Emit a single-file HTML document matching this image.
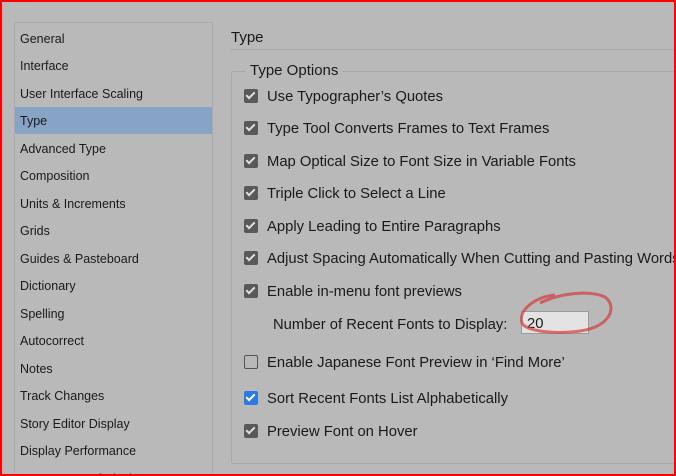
<!DOCTYPE html>
<html><head><style>
html,body{margin:0;width:676px;height:476px;overflow:hidden}
body{background:#b9b9b9;font-family:"Liberation Sans",sans-serif;color:#1a1a1a;position:relative}
.frame{position:absolute;left:0;top:0;width:672px;height:472px;border:2px solid #f00;z-index:5}
.side{position:absolute;left:14px;top:22px;width:197px;height:452px;border:1px solid #aaa;border-bottom:0;background:#b9b9b9;overflow:hidden}
.side div{position:absolute;left:5px;font-size:12.5px;height:27px;line-height:28px;width:188px}
.sel{background:#87a3c6;left:0!important;padding-left:5px;width:192px!important}
.h{position:absolute;left:231px;top:29px;font-size:15px}
.hl{position:absolute;left:230px;top:49px;width:446px;height:1px;background:#a8a8a8}
.grp{position:absolute;left:231px;top:71px;width:460px;height:391px;border:1px solid #a9a9a9;border-radius:3px}
.gt{position:absolute;left:246px;top:62px;font-size:15px;background:#b9b9b9;padding:0 4px}
.r{position:absolute;left:244px;font-size:14.8px;white-space:nowrap;height:20px;line-height:22px}
.cb{display:inline-block;width:14px;height:14px;border-radius:2px;background:#595959;vertical-align:-2px;margin-right:9px;position:relative}
.cb::after{content:"";position:absolute;left:4px;top:1px;width:3px;height:7px;border:solid #ddd;border-width:0 2px 2px 0;transform:rotate(45deg)}
.cb.b{background:#2a7ae2}.cb.b::after{border-color:#fff}
.cb.e{background:none;border:1px solid #555;width:12px;height:12px}.cb.e::after{display:none}
.inp{position:absolute;left:521px;top:311px;width:68px;height:23px;background:#e3e3e3;border:1px solid #999;font-size:14.8px;line-height:24px;padding-left:5px;box-sizing:border-box}
</style></head><body>
<div class="frame"></div>
<div class="side">
<div style="top:2px">General</div>
<div style="top:29px">Interface</div>
<div style="top:57px">User Interface Scaling</div>
<div class="sel" style="top:84px">Type</div>
<div style="top:112px">Advanced Type</div>
<div style="top:139px">Composition</div>
<div style="top:167px">Units &amp; Increments</div>
<div style="top:194px">Grids</div>
<div style="top:222px">Guides &amp; Pasteboard</div>
<div style="top:249px">Dictionary</div>
<div style="top:277px">Spelling</div>
<div style="top:304px">Autocorrect</div>
<div style="top:332px">Notes</div>
<div style="top:359px">Track Changes</div>
<div style="top:387px">Story Editor Display</div>
<div style="top:414px">Display Performance</div>
<div style="top:442px">Appearance of Black</div>
</div>
<div class="h">Type</div><div class="hl"></div>
<div class="grp"></div><div class="gt">Type Options</div>
<div class="r" style="top:86px"><span class="cb"></span>Use Typographer’s Quotes</div>
<div class="r" style="top:118px"><span class="cb"></span>Type Tool Converts Frames to Text Frames</div>
<div class="r" style="top:151px"><span class="cb"></span>Map Optical Size to Font Size in Variable Fonts</div>
<div class="r" style="top:183px"><span class="cb"></span>Triple Click to Select a Line</div>
<div class="r" style="top:216px"><span class="cb"></span>Apply Leading to Entire Paragraphs</div>
<div class="r" style="top:248px"><span class="cb"></span>Adjust Spacing Automatically When Cutting and Pasting Words</div>
<div class="r" style="top:281px"><span class="cb"></span>Enable in-menu font previews</div>
<div class="r" style="top:314px;left:273px">Number of Recent Fonts to Display:</div>
<div class="inp">20</div>
<svg style="position:absolute;left:510px;top:285px;z-index:3" width="110" height="60"><path d="M30 18 C50 8 80 5 95 12 C108 22 100 42 70 46 C40 50 15 45 12 38 C8 25 25 12 45 10" fill="none" stroke="#d04545" stroke-width="3" opacity=".75"/></svg>
<div class="r" style="top:352px"><span class="cb e"></span>Enable Japanese Font Preview in ‘Find More’</div>
<div class="r" style="top:388px"><span class="cb b"></span>Sort Recent Fonts List Alphabetically</div>
<div class="r" style="top:421px"><span class="cb"></span>Preview Font on Hover</div>
</body></html>
